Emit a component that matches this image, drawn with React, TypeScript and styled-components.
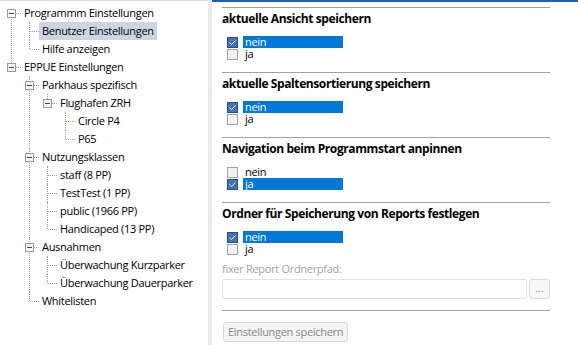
import styled, { createGlobalStyle, css } from "styled-components";

const GlobalStyle = createGlobalStyle`
  html, body {
    margin: 0;
    padding: 0;
    background: #ffffff;
    overflow: hidden;
  }
  body {
    font-family: "Open Sans", "Noto Sans", sans-serif;
    font-size: 11px;
    letter-spacing: -0.3px;
    color: #000000;
  }
`;

type TreeNode = {
  label: string;
  selected?: boolean;
  children?: TreeNode[];
};

const tree: TreeNode[] = [
  {
    label: "Programmm Einstellungen",
    children: [
      { label: "Benutzer Einstellungen", selected: true },
      { label: "Hilfe anzeigen" },
    ],
  },
  {
    label: "EPPUE Einstellungen",
    children: [
      {
        label: "Parkhaus spezifisch",
        children: [
          {
            label: "Flughafen ZRH",
            children: [{ label: "Circle P4" }, { label: "P65" }],
          },
        ],
      },
      {
        label: "Nutzungsklassen",
        children: [
          { label: "staff (8 PP)" },
          { label: "TestTest (1 PP)" },
          { label: "public (1966 PP)" },
          { label: "Handicaped (13 PP)" },
        ],
      },
      {
        label: "Ausnahmen",
        children: [
          { label: "Überwachung Kurzparker" },
          { label: "Überwachung Dauerparker" },
        ],
      },
      { label: "Whitelisten" },
    ],
  },
];

const sections = [
  { title: "aktuelle Ansicht speichern", checked: "nein" },
  { title: "aktuelle Spaltensortierung speichern", checked: "nein" },
  { title: "Navigation beim Programmstart anpinnen", checked: "ja" },
];

const Window = styled.div`
  display: flex;
  height: 345px;
  width: 578px;
`;

const Sidebar = styled.div`
  width: 208px;
  flex-shrink: 0;
  border-top: 1px solid #dcdcdc;
  padding-top: 3px;
  box-sizing: border-box;
  background: #ffffff;
`;

const Splitter = styled.div`
  width: 4px;
  flex-shrink: 0;
  background: #ebebeb;
`;

const List = styled.ul<{ $nested?: boolean }>`
  list-style: none;
  margin: 0;
  padding: 0 0 0 ${(p) => (p.$nested ? 18 : 0)}px;
`;

const Item = styled.li<{ $root?: boolean; $first?: boolean; $last?: boolean }>`
  position: relative;

  &::before {
    content: "";
    position: absolute;
    left: 11px;
    top: ${(p) => (p.$root && p.$first ? 9 : 0)}px;
    ${(p) =>
      p.$last
        ? css`
            height: ${p.$root && p.$first ? 0 : 9}px;
          `
        : css`
            bottom: 0;
          `}
    border-left: 1px dotted #a0a0a0;
  }

  &::after {
    content: "";
    position: absolute;
    left: 12px;
    top: 9px;
    width: 9px;
    border-top: 1px dotted #a0a0a0;
  }
`;

const Row = styled.div`
  display: flex;
  align-items: center;
  height: 18px;
  padding-left: 7px;
`;

const Expander = styled.svg`
  position: relative;
  z-index: 1;
  width: 9px;
  height: 9px;
  margin-right: 5px;
  flex-shrink: 0;
`;

const Spacer = styled.span`
  width: 9px;
  margin-right: 5px;
  flex-shrink: 0;
`;

const Label = styled.span<{ $selected?: boolean }>`
  position: relative;
  z-index: 1;
  height: 18px;
  line-height: 18px;
  padding: 0 3px;
  white-space: nowrap;
  background: ${(p) => (p.$selected ? "#cbd6e2" : "transparent")};
`;

function TreeItems({
  nodes,
  root,
}: {
  nodes: TreeNode[];
  root?: boolean;
}) {
  return (
    <List $nested={!root}>
      {nodes.map((n, i) => (
        <Item
          key={n.label}
          $root={root}
          $first={i === 0}
          $last={i === nodes.length - 1}
        >
          <Row>
            {n.children ? (
              <Expander viewBox="0 0 9 9">
                <rect
                  x="0.5"
                  y="0.5"
                  width="8"
                  height="8"
                  fill="#f7f7f7"
                  stroke="#9a9a9a"
                />
                <line
                  x1="2"
                  y1="4.5"
                  x2="7"
                  y2="4.5"
                  stroke="#2c4a78"
                  strokeWidth="1"
                />
              </Expander>
            ) : (
              <Spacer />
            )}
            <Label $selected={n.selected}>{n.label}</Label>
          </Row>
          {n.children && <TreeItems nodes={n.children} />}
        </Item>
      ))}
    </List>
  );
}

const Main = styled.div`
  flex: 1;
  border-top: 2px solid #1b63b6;
  background: #ffffff;
`;

const Content = styled.div`
  width: 328px;
  margin-left: 10px;
  padding-top: 5px;
`;

const Section = styled.div<{ $extra?: boolean }>`
  border-top: 1px solid #a0a0a0;
  padding: 2px 0 ${(p) => (p.$extra ? 11 : 12)}px;
`;

const Heading = styled.div`
  height: 18px;
  line-height: 18px;
  font-weight: 700;
  font-size: 12px;
  letter-spacing: -0.4px;
  white-space: nowrap;
`;

const Options = styled.div`
  margin-top: 8px;
  padding-left: 5px;
`;

const OptionRow = styled.div`
  display: flex;
  align-items: center;
  height: 12px;
`;

const Box = styled.svg`
  width: 11px;
  height: 11px;
  flex-shrink: 0;
  margin-right: 5px;
`;

const OptionText = styled.span<{ $checked?: boolean }>`
  width: 98px;
  height: 12px;
  line-height: 12px;
  padding-left: 2px;
  color: ${(p) => (p.$checked ? "#ffffff" : "#000000")};
  background: ${(p) => (p.$checked ? "#0078d7" : "transparent")};
`;

const FieldLabel = styled.div`
  margin-top: 5px;
  height: 18px;
  line-height: 18px;
  color: #a3a3a3;
`;

const FieldRow = styled.div`
  display: flex;
  gap: 2px;
  margin-top: 1px;
`;

const Input = styled.div`
  width: 305px;
  height: 20px;
  box-sizing: border-box;
  border: 1px solid #e2e2e2;
  border-radius: 2px;
  background: #ffffff;
`;

const BrowseButton = styled.div`
  width: 21px;
  height: 20px;
  box-sizing: border-box;
  border: 1px solid #dcdcdc;
  border-radius: 3px;
  background: #f7f7f7;
  color: #8d8aa8;
  font-size: 11px;
  letter-spacing: 0;
  line-height: 16px;
  text-align: center;
`;

const Footer = styled.div`
  border-top: 1px solid #a0a0a0;
  padding-top: 11px;
`;

const SaveButton = styled.div`
  display: inline-block;
  margin-left: 1px;
  height: 20px;
  box-sizing: border-box;
  padding: 0 4px;
  border: 1px solid #d8d8d8;
  border-radius: 3px;
  background: #f4f4f4;
  color: #888888;
  line-height: 18px;
  white-space: nowrap;
`;

function CheckBox({ checked }: { checked: boolean }) {
  return (
    <Box viewBox="0 0 11 11">
      {checked ? (
        <>
          <rect
            x="0.5"
            y="0.5"
            width="10"
            height="10"
            fill="#4673b0"
            stroke="#23508f"
          />
          <path
            d="M2.5 5.5 L4.5 7.5 L8.5 3.5"
            fill="none"
            stroke="#dce7f6"
            strokeWidth="1"
          />
        </>
      ) : (
        <rect
          x="0.5"
          y="0.5"
          width="10"
          height="10"
          fill="#f2f2f2"
          stroke="#a2a2a2"
        />
      )}
    </Box>
  );
}

function Choice({ checked }: { checked: string }) {
  return (
    <Options>
      {["nein", "ja"].map((o) => (
        <OptionRow key={o}>
          <CheckBox checked={o === checked} />
          <OptionText $checked={o === checked}>{o}</OptionText>
        </OptionRow>
      ))}
    </Options>
  );
}

export default function App() {
  return (
    <>
      <GlobalStyle />
      <Window>
        <Sidebar>
          <TreeItems nodes={tree} root />
        </Sidebar>
        <Splitter />
        <Main>
          <Content>
            {sections.map((s) => (
              <Section key={s.title}>
                <Heading>{s.title}</Heading>
                <Choice checked={s.checked} />
              </Section>
            ))}
            <Section $extra>
              <Heading>Ordner für Speicherung von Reports festlegen</Heading>
              <Choice checked="nein" />
              <FieldLabel>fixer Report Ordnerpfad:</FieldLabel>
              <FieldRow>
                <Input />
                <BrowseButton>...</BrowseButton>
              </FieldRow>
            </Section>
            <Footer>
              <SaveButton>Einstellungen speichern</SaveButton>
            </Footer>
          </Content>
        </Main>
      </Window>
    </>
  );
}
